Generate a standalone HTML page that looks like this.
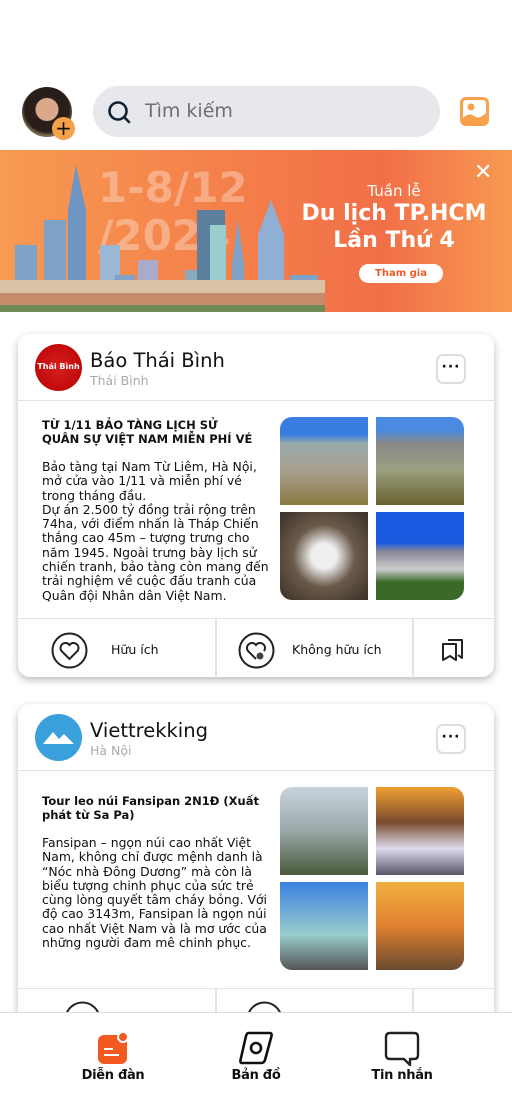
<!DOCTYPE html>
<html><head><meta charset="utf-8"><style>
*{box-sizing:border-box;margin:0;padding:0}
body{width:512px;height:1110px;overflow:hidden;background:#fff;font-family:"DejaVu Sans","Liberation Sans",sans-serif;position:relative;color:#111}
.abs{position:absolute}
.card{position:absolute;left:18px;width:476px;background:#fff;border-radius:12px;box-shadow:0 3px 8px rgba(0,0,0,.28)}
.hdr{position:absolute;left:0;right:0;top:0;height:67px;border-bottom:1.5px solid #e3e3e3}
.name{position:absolute;left:72px;top:15px;font-size:19.5px}
.loc{position:absolute;left:72px;top:39px;font-size:12.5px;color:#aaa}
.more{position:absolute;right:28px;top:20px;width:30px;height:30px;border:2px solid #ddd;border-radius:7px;text-align:center;font-weight:bold;font-size:14px;line-height:22px;letter-spacing:1px}
.title{position:absolute;left:24px;top:84px;width:250px;font-size:11.5px;font-weight:bold;line-height:14px;white-space:nowrap}
.txt{position:absolute;left:24px;width:236px;font-size:12.4px;line-height:14.3px}
.img{position:absolute;width:88px;height:88px}
.act{position:absolute;left:0;right:0;height:60px;border-top:1.5px solid #e3e3e3}
</style></head><body>
<div class="abs" style="left:22px;top:87px;width:50px;height:50px;border-radius:50%;background:radial-gradient(circle at 50% 45%,#d9a98a 0 30%,#2a1e1a 32% 60%,#7a6a50 70%)"></div>
<div class="abs" style="left:52px;top:117px;width:23px;height:23px;border-radius:50%;background:#f7a14a;text-align:center;font-size:20px;line-height:22px;color:#111">+</div>
<div class="abs" style="left:93px;top:86px;width:347px;height:51px;border-radius:26px;background:#e6e8ec"></div>
<svg class="abs" style="left:107px;top:100px" width="26" height="26" viewBox="0 0 26 26"><circle cx="11" cy="11" r="8.5" fill="none" stroke="#123" stroke-width="2.6"/><path d="M17 17l5 5" stroke="#123" stroke-width="2.6" stroke-linecap="round"/></svg>
<div class="abs" style="left:145px;top:100px;font-size:19px;color:#6e6e6e">Tìm kiếm</div>
<svg class="abs" style="left:459px;top:96px" width="31" height="31" viewBox="0 0 31 31"><rect x="1" y="1" width="29" height="29" rx="6" fill="#f7a14a"/><rect x="4" y="4" width="23" height="23" rx="3" fill="#fff"/><circle cx="12" cy="11" r="3.5" fill="#f7a14a"/><path d="M4 22q6-6 11-2t12-3v10H4z" fill="#f7a14a"/></svg>
<div class="abs" style="left:0;top:150px;width:512px;height:162px;background:linear-gradient(90deg,#f79a52,#f4824b 40%,#f26f48 75%,#f79a52)"></div>
<div class="abs" style="left:98px;top:164px;font-size:42px;font-weight:bold;color:rgba(255,255,255,.32);line-height:48px">1-8/12<br>/2024</div>
<svg class="abs" style="left:0;top:165px" width="330" height="150" viewBox="0 0 330 150">
<g fill="#7fa3c8"><rect x="15" y="80" width="22" height="60"/><rect x="44" y="55" width="22" height="85"/><path d="M68 140V45l8-45 10 45v95z" fill="#6f96c2"/><rect x="100" y="80" width="20" height="60" fill="#9ab8d6"/><rect x="115" y="110" width="20" height="30"/><rect x="138" y="95" width="20" height="45" fill="#aac"/><rect x="185" y="105" width="35" height="35" fill="#8ab"/><rect x="197" y="45" width="28" height="95" fill="#5c7f9e"/><rect x="210" y="60" width="16" height="80" fill="#9cc"/><path d="M232 140V100l6-45 6 45v40z"/><path d="M258 140V70l13-35 13 35v70z" fill="#8fb0d4"/><rect x="290" y="110" width="28" height="30"/></g>
<rect x="0" y="115" width="325" height="32" fill="#d9c2a6"/><rect x="0" y="128" width="325" height="18" fill="#c58b6a"/><rect x="0" y="140" width="325" height="7" fill="#6f8a55"/></svg>
<div class="abs" style="left:474px;top:160px;font-size:22px;color:#fff">✕</div>
<div class="abs" style="left:290px;top:182px;width:208px;text-align:center;color:#fff;font-size:15px">Tuần lễ</div>
<div class="abs" style="left:285px;top:200px;width:218px;text-align:center;color:#fff;font-size:22px;font-weight:bold;line-height:27px">Du lịch TP.HCM<br>Lần Thứ 4</div>
<div class="abs" style="left:359px;top:264px;width:84px;height:19px;border-radius:10px;background:#fff;color:#f05a2a;font-size:10px;font-weight:bold;text-align:center;line-height:19px">Tham gia</div>
<div class="card" style="top:334px;height:343px">
 <div class="hdr"><div class="abs" style="left:17px;top:10px;width:47px;height:47px;border-radius:50%;background:radial-gradient(#d42020,#b00)"><div style="color:#fff;font-size:8px;font-weight:bold;text-align:center;margin-top:18px">Thái Bình</div></div>
 <div class="name">Báo Thái Bình</div><div class="loc">Thái Bình</div><div class="more">···</div></div>
 <div class="title">TỪ 1/11 BẢO TÀNG LỊCH SỬ<br>QUÂN SỰ VIỆT NAM MIỄN PHÍ VÉ</div>
 <div class="txt" style="top:126px">Bảo tàng tại Nam Từ Liêm, Hà Nội, mở cửa vào 1/11 và miễn phí vé trong tháng đầu.<br>Dự án 2.500 tỷ đồng trải rộng trên 74ha, với điểm nhấn là Tháp Chiến thắng cao 45m – tượng trưng cho năm 1945. Ngoài trưng bày lịch sử chiến tranh, bảo tàng còn mang đến trải nghiệm về cuộc đấu tranh của Quân đội Nhân dân Việt Nam.</div>
 <div class="img" style="left:262px;top:83px;border-radius:12px 0 0 0;background:linear-gradient(#3a7de0 0 20%,#9aa 30%,#a8a090 60%,#8a7a40)"></div>
 <div class="img" style="left:358px;top:83px;border-radius:0 12px 0 0;background:linear-gradient(#4a8ae0 0 15%,#888 30%,#9aa080 60%,#6a6030)"></div>
 <div class="img" style="left:262px;top:178px;border-radius:0 0 0 12px;background:radial-gradient(#eee 0 20%,#6a5a4a 50%,#3a3028)"></div>
 <div class="img" style="left:358px;top:178px;border-radius:0 0 12px 0;background:linear-gradient(#1a5ae0 0 35%,#889 45%,#ccc 65%,#3a6a2a 80%)"></div>
 <div class="act" style="top:284px">
  <div class="abs" style="left:197px;top:0;width:1.5px;height:59px;background:#e3e3e3"></div>
  <div class="abs" style="left:394px;top:0;width:1.5px;height:59px;background:#e3e3e3"></div>
  <svg class="abs" style="left:33px;top:13px" width="37" height="37" viewBox="0 0 37 37"><circle cx="18.5" cy="18.5" r="17" fill="none" stroke="#222" stroke-width="2"/><path d="M18.5 27l-8-8a5 5 0 018-6 5 5 0 018 6z" fill="none" stroke="#222" stroke-width="2"/></svg>
  <div class="abs" style="left:93px;top:23px;font-size:12.5px">Hữu ích</div>
  <svg class="abs" style="left:220px;top:13px" width="37" height="37" viewBox="0 0 37 37"><circle cx="18.5" cy="18.5" r="17" fill="none" stroke="#222" stroke-width="2"/><path d="M18 27l-8-8a5 5 0 018-6 5 5 0 018 6" fill="none" stroke="#222" stroke-width="2"/><circle cx="22" cy="24" r="3.5" fill="#444"/></svg>
  <div class="abs" style="left:274px;top:23px;font-size:12.5px">Không hữu ích</div>
  <svg class="abs" style="left:422px;top:17px" width="26" height="26" viewBox="0 0 26 26"><path d="M8 4h14v18l-4-3M3 8h13v16l-6-4-7 4z" fill="none" stroke="#222" stroke-width="2" stroke-linejoin="round"/></svg>
 </div>
</div>
<div class="card" style="top:704px;height:400px">
 <div class="hdr"><div class="abs" style="left:17px;top:10px;width:47px;height:47px;border-radius:50%;background:#3aa0dc"><svg width="47" height="47"><path d="M8 30l10-12 6 7 5-5 10 10z" fill="#fff"/></svg></div>
 <div class="name">Viettrekking</div><div class="loc">Hà Nội</div><div class="more">···</div></div>
 <div class="title" style="top:90px">Tour leo núi Fansipan 2N1Đ (Xuất<br>phát từ Sa Pa)</div>
 <div class="txt" style="top:132px">Fansipan – ngọn núi cao nhất Việt Nam, không chỉ được mệnh danh là “Nóc nhà Đông Dương” mà còn là biểu tượng chinh phục của sức trẻ cùng lòng quyết tâm cháy bỏng. Với độ cao 3143m, Fansipan là ngọn núi cao nhất Việt Nam và là mơ ước của những người đam mê chinh phục.</div>
 <div class="img" style="left:262px;top:83px;border-radius:12px 0 0 0;background:linear-gradient(#c8d4dc,#9aa8a8 50%,#4a5a3a)"></div>
 <div class="img" style="left:358px;top:83px;border-radius:0 12px 0 0;background:linear-gradient(#f0a030,#7a4a30 40%,#dde 70%,#556)"></div>
 <div class="img" style="left:262px;top:178px;border-radius:0 0 0 12px;background:linear-gradient(#3a80e0,#9cc 60%,#555)"></div>
 <div class="img" style="left:358px;top:178px;border-radius:0 0 12px 0;background:linear-gradient(#f0b040,#e08030 50%,#6a4a30)"></div>
 <div class="act" style="top:284px"><div class="abs" style="left:197px;top:0;width:1.5px;height:59px;background:#e3e3e3"></div><div class="abs" style="left:394px;top:0;width:1.5px;height:59px;background:#e3e3e3"></div>
  <svg class="abs" style="left:46px;top:12px" width="37" height="37" viewBox="0 0 37 37"><circle cx="18.5" cy="18.5" r="17" fill="none" stroke="#222" stroke-width="2"/></svg>
  <svg class="abs" style="left:228px;top:12px" width="37" height="37" viewBox="0 0 37 37"><circle cx="18.5" cy="18.5" r="17" fill="none" stroke="#222" stroke-width="2"/></svg></div>
</div>
<div class="abs" style="left:0;top:1012px;width:512px;height:98px;background:#fff;border-top:1.5px solid #ddd"></div>
<svg class="abs" style="left:96px;top:1031px" width="34" height="34" viewBox="0 0 34 34"><rect x="2" y="4" width="29" height="29" rx="6" fill="#f25a22"/><circle cx="27" cy="6" r="5" fill="#f25a22" stroke="#fff" stroke-width="2"/><path d="M8 18h9M8 24h15" stroke="#fff" stroke-width="2"/></svg>
<div class="abs" style="left:65px;top:1068px;width:96px;text-align:center;font-size:13px;font-weight:bold;letter-spacing:-.3px">Diễn đàn</div>
<svg class="abs" style="left:238px;top:1030px" width="36" height="36" viewBox="0 0 36 36"><path d="M10 3h22q2 0 1.5 3L27 30q-1 3-4 3H4q-2 0-1.5-3L8 6q1-3 2-3z" fill="none" stroke="#111" stroke-width="2.6" stroke-linejoin="round"/><circle cx="18" cy="18" r="5" fill="none" stroke="#111" stroke-width="2.6"/></svg>
<div class="abs" style="left:208px;top:1068px;width:96px;text-align:center;font-size:13px;font-weight:bold;letter-spacing:-.3px">Bản đồ</div>
<svg class="abs" style="left:382px;top:1030px" width="40" height="38" viewBox="0 0 40 38"><path d="M8 3h24q4 0 4 4v18q0 4-4 4h-4v6l-6-6H8q-4 0-4-4V7q0-4 4-4z" fill="none" stroke="#222" stroke-width="2.4" stroke-linejoin="round"/></svg>
<div class="abs" style="left:354px;top:1068px;width:96px;text-align:center;font-size:13px;font-weight:bold;letter-spacing:-.3px">Tin nhắn</div>
</body></html>
